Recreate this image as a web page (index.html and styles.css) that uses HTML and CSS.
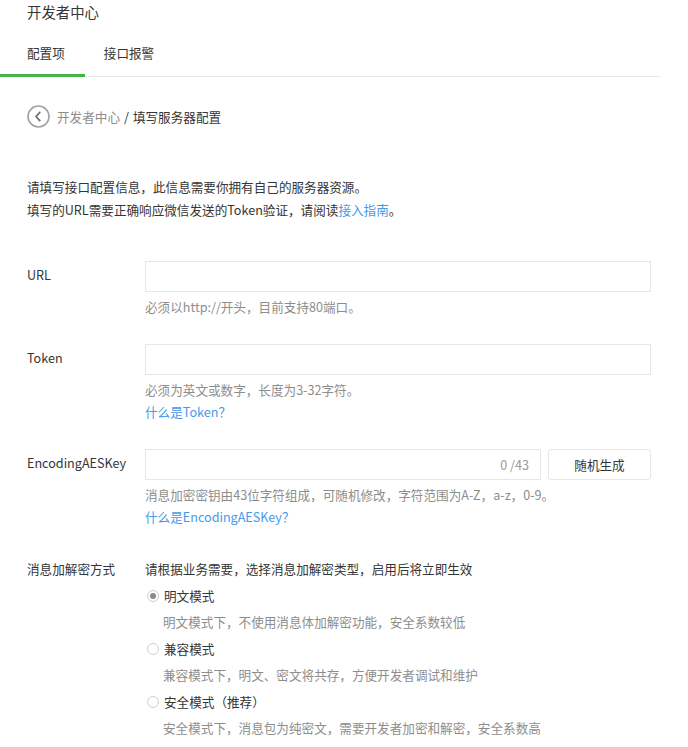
FILE: index.html
```html
<!DOCTYPE html>
<html lang="zh-CN">
<head>
    <meta charset="UTF-8">
    <meta name="viewport" content="width=device-width, initial-scale=1.0">
    <title>填写服务器配置</title>
    <link rel="stylesheet" href="styles.css">
</head>
<body>
    <div class="header">
        <h2 class="title">开发者中心</h2>
        <ul class="tabs">
            <li class="tab active">配置项</li>
            <li class="tab">接口报警</li>
        </ul>
    </div>
    <div class="main">
        <div class="crumbs">
            <a href="#" class="back">
                <svg width="23" height="23" viewBox="0 0 23 23">
                    <circle cx="11.5" cy="11.5" r="10.5" fill="none" stroke="#a3a3a3" stroke-width="1.6"/>
                    <path d="M12.8 7.4 L9 11.5 L12.8 15.6" fill="none" stroke="#6f6f6f" stroke-width="1.8" stroke-linecap="round" stroke-linejoin="round"/>
                </svg>
            </a>
            <span class="crumb-prev">开发者中心</span>
            <span class="crumb-sep">/</span>
            <span class="crumb-cur">填写服务器配置</span>
        </div>

        <div class="intro">
            <p>请填写接口配置信息，此信息需要你拥有自己的服务器资源。</p>
            <p>填写的URL需要正确响应微信发送的Token验证，请阅读<a href="#">接入指南</a>。</p>
        </div>

        <div class="form">
            <div class="field">
                <label class="field-label">URL</label>
                <div class="field-body">
                    <div class="input"></div>
                    <p class="hint">必须以http://开头，目前支持80端口。</p>
                </div>
            </div>
            <div class="field">
                <label class="field-label">Token</label>
                <div class="field-body">
                    <div class="input"></div>
                    <p class="hint">必须为英文或数字，长度为3-32字符。</p>
                    <p class="hint"><a href="#">什么是Token？</a></p>
                </div>
            </div>
            <div class="field">
                <label class="field-label">EncodingAESKey</label>
                <div class="field-body">
                    <div class="input-row">
                        <div class="input counted"><span class="counter">0 /43</span></div>
                        <button class="btn">随机生成</button>
                    </div>
                    <p class="hint">消息加密密钥由43位字符组成，可随机修改，字符范围为A-Z，a-z，0-9。</p>
                    <p class="hint"><a href="#">什么是EncodingAESKey？</a></p>
                </div>
            </div>
            <div class="field enc">
                <label class="field-label">消息加解密方式</label>
                <div class="field-body">
                    <p class="enc-tip">请根据业务需要，选择消息加解密类型，启用后将立即生效</p>
                    <div class="radio-item">
                        <span class="radio checked"></span>明文模式
                    </div>
                    <p class="radio-desc">明文模式下，不使用消息体加解密功能，安全系数较低</p>
                    <div class="radio-item">
                        <span class="radio"></span>兼容模式
                    </div>
                    <p class="radio-desc">兼容模式下，明文、密文将共存，方便开发者调试和维护</p>
                    <div class="radio-item">
                        <span class="radio"></span>安全模式（推荐）
                    </div>
                    <p class="radio-desc">安全模式下，消息包为纯密文，需要开发者加密和解密，安全系数高</p>
                </div>
            </div>
        </div>
    </div>
</body>
</html>
```

FILE: styles.css
```css
body {
    margin: 0;
    padding: 0;
    background: #fff;
    color: #353535;
    font-family: "Noto Sans CJK SC", "Liberation Sans", sans-serif;
    font-size: 12.6px;
}
p {
    margin: 0;
}
a {
    color: #459ae9;
    text-decoration: none;
}
.header {
    width: 660px;
}
.title {
    margin: 0;
    padding-left: 27px;
    font-size: 14.4px;
    font-weight: normal;
    line-height: 24px;
}
.tabs {
    list-style: none;
    margin: 0;
    padding: 0;
    display: flex;
    border-bottom: 1px solid #e7e7eb;
}
.tab {
    padding: 17px 19px 9px 19px;
    line-height: 24px;
    border-bottom: 3px solid transparent;
    margin-bottom: -1px;
    font-size: 12.6px;
}
.tab.active {
    padding-left: 27px;
    padding-right: 20px;
    border-bottom-color: #44b549;
}
.main {
    padding-left: 27px;
    width: 624px;
}
.crumbs {
    margin-top: 28px;
    display: flex;
    align-items: center;
    height: 23px;
}
.back {
    display: flex;
    margin-right: 7px;
}
.crumb-prev {
    color: #8d8d8d;
}
.crumb-sep {
    margin: 0 4px;
}
.intro {
    margin-top: 47px;
    line-height: 23px;
}
.form {
    margin-top: 40px;
}
.field {
    display: flex;
    margin-bottom: 26px;
}
.field-label {
    width: 118px;
    flex-shrink: 0;
    line-height: 28px;
}
.field-body {
    width: 506px;
}
.input {
    height: 29px;
    border: 1px solid #e7e7eb;
    box-sizing: content-box;
}
.input-row {
    display: flex;
    gap: 7px;
}
.input.counted {
    flex: 1;
    display: flex;
    align-items: center;
    justify-content: flex-end;
    padding-right: 11px;
}
.counter {
    color: #9a9a9a;
    font-size: 12.6px;
}
.btn {
    width: 103px;
    height: 31px;
    border: 1px solid #e4e8eb;
    border-radius: 3px;
    background: #fff;
    color: #353535;
    font-family: inherit;
    font-size: 12.6px;
    padding: 0;
}
.hint {
    color: #8d8d8d;
    line-height: 22px;
}
.input + .hint,
.input-row + .hint {
    margin-top: 4px;
}
.enc {
    padding-top: 2px;
}
.enc .field-label,
.enc-tip,
.radio-item,
.radio-desc {
    line-height: 26.5px;
}
.radio-item {
    display: flex;
    align-items: center;
    padding-left: 2px;
}
.radio {
    width: 10px;
    height: 10px;
    border: 1px solid #cfcfcf;
    border-radius: 50%;
    margin-right: 5px;
    display: flex;
    align-items: center;
    justify-content: center;
    background: #fff;
}
.radio.checked::after {
    content: "";
    width: 6px;
    height: 6px;
    border-radius: 50%;
    background: #8a8a8a;
}
.radio-desc {
    padding-left: 18px;
    color: #8d8d8d;
}
```
